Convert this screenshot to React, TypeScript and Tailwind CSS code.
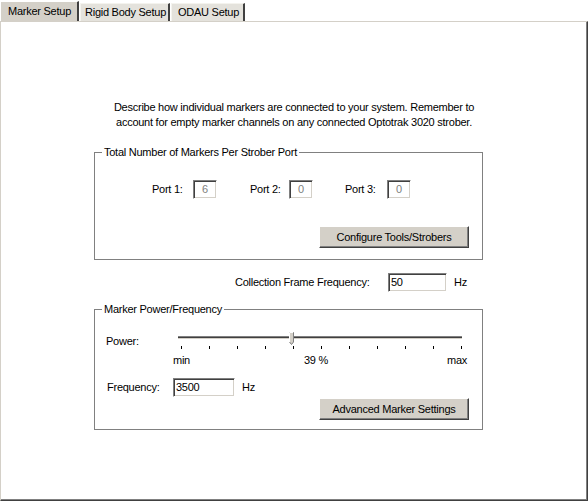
import React from "react"

const font = "font-['Liberation_Sans',Arial,sans-serif] text-[11px] leading-[13px] tracking-[-0.25px] text-black"

export default function App() {
    return (
        <div className={`w-[588px] h-[501px] bg-white overflow-hidden ${font}`}>
            <Tabs/>
            <Panel/>
        </div>
    )
}

function Tabs() {
    return (
        <div className="flex items-end h-[21px] whitespace-nowrap">
            <div className="h-[20px] w-[79px] bg-[#d4d0c8] border-t border-l border-white border-r-2 border-r-[#404040] pl-[7px] pt-[3px]">
                Marker Setup
            </div>
            <div className="ml-[1px] h-[18px] w-[90px] bg-[#e4e2dc] border-t border-l border-[#f4f3ee] border-r-2 border-r-[#404040] pl-[4px] pt-[2px]">
                Rigid Body Setup
            </div>
            <div className="ml-[1px] h-[18px] w-[74px] bg-[#e4e2dc] border-t border-l border-[#f4f3ee] border-r-2 border-r-[#404040] pl-[6px] pt-[2px]">
                ODAU Setup
            </div>
        </div>
    )
}

function Panel() {
    return (
        <div className="h-[480px] border-t border-l border-[#d4d0c8] border-r border-b border-r-[#404040] border-b-[#404040] shadow-[inset_-1px_-1px_0_#808080]">
            <p className="mt-[78px] text-center leading-[15px]">
                Describe how individual markers are connected to your system. Remember to<br/>
                account for empty marker channels on any connected Optotrak 3020 strober.
            </p>
            <GroupBox title="Total Number of Markers Per Strober Port" className="mt-[16px]">
                <div className="flex items-center mt-[21px] pl-[57px]">
                    <span className="w-[41px]">Port 1:</span>
                    <Field value="6" className="w-[24px] text-center" disabled/>
                    <span className="ml-[33px] w-[39px]">Port 2:</span>
                    <Field value="0" className="w-[24px] text-center" disabled/>
                    <span className="ml-[32px] w-[42px]">Port 3:</span>
                    <Field value="0" className="w-[24px] text-center" disabled/>
                </div>
                <div className="flex justify-end mt-[27px] pr-[13px] pb-[11px]">
                    <Button label="Configure Tools/Strobers"/>
                </div>
            </GroupBox>
            <div className="flex items-center mt-[13px] pl-[234px]">
                <span className="w-[153px]">Collection Frame Frequency:</span>
                <Field value="50" className="w-[59px] pl-[2px]"/>
                <span className="ml-[7px]">Hz</span>
            </div>
            <GroupBox title="Marker Power/Frequency" className="mt-[11px]">
                <div className="flex items-start mt-[15px] pl-[11px]">
                    <span className="w-[67px] mt-[4px]">Power:</span>
                    <div>
                        <Slider/>
                        <div className="flex mt-[5px] w-[294px]">
                            <span>min</span>
                            <span className="ml-[114px]">39 %</span>
                            <span className="ml-auto">max</span>
                        </div>
                    </div>
                </div>
                <div className="flex items-center mt-[11px] pl-[12px]">
                    <span className="w-[66px]">Frequency:</span>
                    <Field value="3500" className="w-[62px] pl-[2px]"/>
                    <span className="ml-[7px]">Hz</span>
                </div>
                <div className="flex justify-end mt-[1px] pr-[13px] pb-[9px]">
                    <Button label="Advanced Marker Settings"/>
                </div>
            </GroupBox>
        </div>
    )
}

function GroupBox({ title, className, children }: { title: string, className?: string, children: React.ReactNode }) {
    return (
        <fieldset className={`ml-[93px] w-[389px] border border-[#808080] shadow-[inset_1px_1px_0_#fff] ${className ?? ""}`}>
            <legend className="ml-[7px] px-[2px] leading-[13px]">{title}</legend>
            {children}
        </fieldset>
    )
}

function Field({ value, className, disabled }: { value: string, className?: string, disabled?: boolean }) {
    return (
        <div className={`h-[19px] bg-white border border-t-[#808080] border-l-[#808080] border-b-white border-r-white shadow-[inset_1px_1px_0_#404040,inset_-1px_-1px_0_#d4d0c8] leading-[17px] ${disabled ? "text-[#808080]" : ""} ${className ?? ""}`}>
            {value}
        </div>
    )
}

function Button({ label }: { label: string }) {
    return (
        <button className="w-[150px] h-[22px] bg-[#d4d0c8] border border-t-white border-l-white border-b-[#404040] border-r-[#404040] shadow-[inset_-1px_-1px_0_#808080] leading-[14px]">
            {label}
        </button>
    )
}

function Slider() {
    const ticks = Array.from({ length: 11 }, (_, i) => 8 + i * 28)
    return (
        <svg width="294" height="18" viewBox="0 0 294 18" className="block">
            <rect x="5" y="5" width="284" height="1" fill="#808080"/>
            <rect x="5" y="6" width="284" height="1" fill="#404040"/>
            <rect x="5" y="7" width="284" height="1" fill="#d4d0c8"/>
            <rect x="5" y="8" width="284" height="1" fill="#ffffff"/>
            {ticks.map(x => (
                <rect key={x} x={x} y="15" width="1" height="3" fill="#000"/>
            ))}
            <path d="M116.5 1.5 H120.5 V11 L118.5 13.5 L116.5 11 Z" fill="#d4d0c8" stroke="#808080"/>
            <path d="M116.5 11 V1.5 H120" fill="none" stroke="#fff"/>
        </svg>
    )
}
